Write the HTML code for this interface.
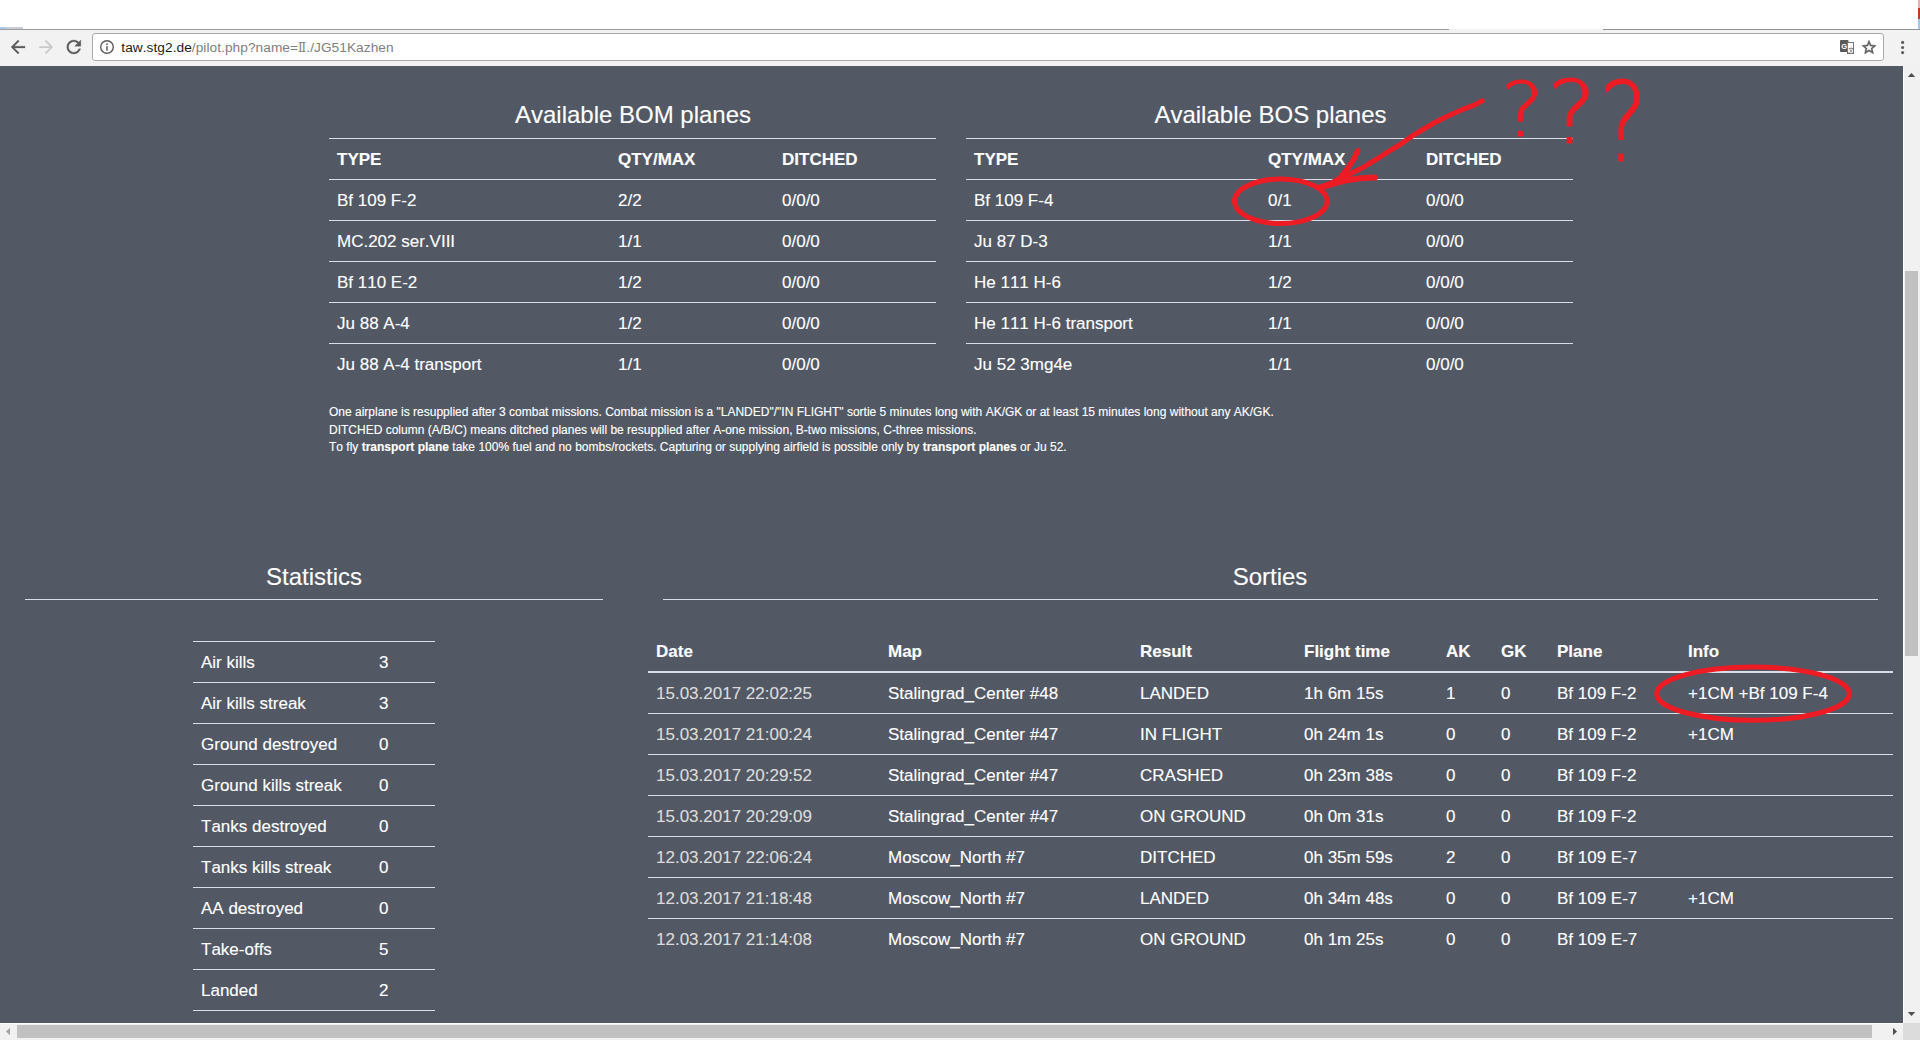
<!DOCTYPE html>
<html lang="en">
<head>
<meta charset="utf-8">
<title>Pilot</title>
<style>
*{box-sizing:border-box;margin:0;padding:0}
html,body{width:1920px;height:1040px;overflow:hidden;background:#fff}
body{position:relative;font-family:"Liberation Sans",Arial,sans-serif;color:#fff;font-size:17px;font-kerning:none;-webkit-text-stroke:0.12px #fff}
#chrome{position:absolute;left:0;top:0;width:1920px;height:66px;background:#fff}
#tabline{position:absolute;left:0;top:29px;width:1920px;height:1px;background:linear-gradient(to right,#9a9ca0 0,#9a9ca0 1449px,#f2f2f2 1449px,#f2f2f2 1603px,#8f949b 1603px)}
#toolbar{position:absolute;left:0;top:30px;width:1920px;height:36px;background:#f2f2f2}
#omni{position:absolute;left:92px;top:33px;width:1792px;height:28px;background:#fff;border:1px solid #aaa;border-radius:3px}
#url{position:absolute;left:121.3px;top:38.5px;font-size:13.7px;line-height:18px;color:#808080;white-space:nowrap;-webkit-text-stroke:0;letter-spacing:0.05px}
#url .rn{font-family:"DejaVu Serif","Liberation Serif",serif;font-size:12px}
#url b{font-weight:normal;color:#1c1c1c}
#page{position:absolute;left:0;top:66px;width:1903px;height:957px;background:#525965;overflow:hidden}
#vscroll{position:absolute;left:1903px;top:66px;width:17px;height:957px;background:#f1f1f1;border-left:1px solid #fdfdfd}
#vthumb{position:absolute;left:1905px;top:271px;width:13px;height:385px;background:#c1c1c1}
#hscroll{position:absolute;left:0;top:1023px;width:1903px;height:17px;background:#f1f1f1;border-top:1px solid #fdfdfd}
#hthumb{position:absolute;left:17px;top:1025px;width:1855px;height:13px;background:#c1c1c1}
#corner{position:absolute;left:1903px;top:1023px;width:17px;height:17px;background:#dcdcdc}
.abs{position:absolute}
h2{position:absolute;font-weight:normal;font-size:24px;line-height:28px;text-align:center;white-space:nowrap}
.hr{position:absolute;height:1px;background:#d9dee7}
table{position:absolute;border-collapse:collapse;table-layout:fixed}
td,th{height:41px;border-top:1px solid #d9dee7;padding:2px 0 0 8px;text-align:left;font-size:17px;white-space:nowrap;vertical-align:middle;line-height:24px}
th{font-weight:bold}
.notes{position:absolute;left:329px;top:404px;font-size:12px;line-height:17.5px;white-space:nowrap}
.sort th{border-top:none;border-bottom:2px solid #d9dee7;height:42px}
.sort tr:first-child + tr td{border-top:none}
.sort td.d{color:#dcdcdc;-webkit-text-stroke-color:#dcdcdc}
</style>
</head>
<body>
<div id="chrome">
  <div id="tabline"></div>
  <div id="toolbar"></div>
  <div id="omni"></div>
  <svg id="icons" style="position:absolute;left:0;top:0" width="1920" height="66" viewBox="0 0 1920 66">
<rect x="0" y="27" width="6" height="2" fill="#a9c7e8"/><rect x="6" y="27" width="17" height="2" fill="#c9cdd2"/>
<g fill="#5a5a5a">
<path transform="translate(7.5,36.5) scale(.875)" stroke="#5a5a5a" stroke-width=".35" d="M20 11H7.83l5.59-5.59L12 4l-8 8 8 8 1.41-1.41L7.83 13H20v-2z"/>
<path transform="translate(35.6,36.5) scale(.875)" fill="#c9c9c9" d="M12 4l-1.41 1.41L16.17 11H4v2h12.17l-5.58 5.59L12 20l8-8z"/>
<path transform="translate(63.3,36.5) scale(.875)" stroke="#5a5a5a" stroke-width=".35" d="M17.65 6.35C16.2 4.9 14.21 4 12 4c-4.42 0-7.99 3.58-7.99 8s3.57 8 7.99 8c3.73 0 6.84-2.55 7.73-6h-2.08c-.82 2.33-3.04 4-5.65 4-3.31 0-6-2.69-6-6s2.69-6 6-6c1.66 0 3.14.69 4.22 1.78L13 11h7V4l-2.35 2.35z"/>
<circle cx="107" cy="47" r="6.3" fill="none" stroke="#5a5a5a" stroke-width="1.4"/>
<rect x="106.25" y="43.4" width="1.5" height="1.6"/><rect x="106.25" y="46.2" width="1.5" height="4.4"/>
<rect x="1840" y="40" width="8.5" height="12" rx="1"/>
<rect x="1847.5" y="42.5" width="6" height="11" fill="#fff" stroke="#777" stroke-width="1"/>
<path d="M1847 52l0 2 2 0z"/>
<path transform="translate(1860.45,38.85) scale(.715)" stroke="#5a5a5a" stroke-width=".7" d="M22 9.24l-7.19-.62L12 2 9.19 8.63 2 9.24l5.46 4.73L5.82 21 12 17.27 18.18 21l-1.63-7.03L22 9.24zM12 15.4l-3.76 2.27 1-4.28-3.32-2.88 4.38-.38L12 6.1l1.71 4.04 4.38.38-3.32 2.88 1 4.28L12 15.4z"/>
<circle cx="1902.6" cy="42.4" r="1.55"/><circle cx="1902.6" cy="47.5" r="1.55"/><circle cx="1902.6" cy="52.6" r="1.55"/>
</g>
<text x="1841.3" y="49.3" font-family="Liberation Sans, sans-serif" font-weight="bold" font-size="7.5" fill="#fff">G</text>
<text x="1848.2" y="51.6" font-family="Liberation Sans, Noto Sans CJK SC, sans-serif" font-size="5.6" fill="#5a5a5a">文</text>
<rect x="1918" y="0" width="2" height="8" fill="#e8b0a8"/><rect x="1918" y="8" width="2" height="11" fill="#c0392b"/><rect x="1918" y="19" width="2" height="10" fill="#a9c4ea"/>
</svg>
  <div id="url"><b>taw.stg2.de</b>/pilot.php?name=<span class="rn">Ⅱ</span>./JG51Kazhen</div>
</div>
<div id="page"><div id="in" style="position:absolute;left:0;top:-66px;width:1903px;height:1040px">
<h2 style="left:329.5px;width:607px;top:101px">Available BOM planes</h2>
<table class="planes" style="left:329px;top:138px;width:607px">
<colgroup><col style="width:281px"><col style="width:164px"><col style="width:162px"></colgroup>
<tr><th>TYPE</th><th>QTY/MAX</th><th>DITCHED</th></tr>
<tr><td>Bf 109 F-2</td><td>2/2</td><td>0/0/0</td></tr>
<tr><td>MC.202 ser.VIII</td><td>1/1</td><td>0/0/0</td></tr>
<tr><td>Bf 110 E-2</td><td>1/2</td><td>0/0/0</td></tr>
<tr><td>Ju 88 A-4</td><td>1/2</td><td>0/0/0</td></tr>
<tr><td>Ju 88 A-4 transport</td><td>1/1</td><td>0/0/0</td></tr>
</table>
<h2 style="left:967px;width:607px;top:101px">Available BOS planes</h2>
<table class="planes" style="left:966px;top:138px;width:607px">
<colgroup><col style="width:294px"><col style="width:158px"><col style="width:155px"></colgroup>
<tr><th>TYPE</th><th>QTY/MAX</th><th>DITCHED</th></tr>
<tr><td>Bf 109 F-4</td><td>0/1</td><td>0/0/0</td></tr>
<tr><td>Ju 87 D-3</td><td>1/1</td><td>0/0/0</td></tr>
<tr><td>He 111 H-6</td><td>1/2</td><td>0/0/0</td></tr>
<tr><td>He 111 H-6 transport</td><td>1/1</td><td>0/0/0</td></tr>
<tr><td>Ju 52 3mg4e</td><td>1/1</td><td>0/0/0</td></tr>
</table>
<div class="notes">One airplane is resupplied after 3 combat missions. Combat mission is a "LANDED"/"IN FLIGHT" sortie 5 minutes long with AK/GK or at least 15 minutes long without any AK/GK.<br>DITCHED column (A/B/C) means ditched planes will be resupplied after A-one mission, B-two missions, C-three missions.<br>To fly <b>transport plane</b> take 100% fuel and no bombs/rockets. Capturing or supplying airfield is possible only by <b>transport planes</b> or Ju 52.</div>

<h2 style="left:25px;width:578px;top:563px">Statistics</h2>
<div class="hr" style="left:25px;width:578px;top:599px"></div>
<table class="stats" style="left:193px;top:641px;width:242px">
<colgroup><col style="width:178px"><col style="width:64px"></colgroup>
<tr><td>Air kills</td><td>3</td></tr>
<tr><td>Air kills streak</td><td>3</td></tr>
<tr><td>Ground destroyed</td><td>0</td></tr>
<tr><td>Ground kills streak</td><td>0</td></tr>
<tr><td>Tanks destroyed</td><td>0</td></tr>
<tr><td>Tanks kills streak</td><td>0</td></tr>
<tr><td>AA destroyed</td><td>0</td></tr>
<tr><td>Take-offs</td><td>5</td></tr>
<tr><td>Landed</td><td>2</td></tr>
<tr><td></td><td></td></tr>
</table>

<h2 style="left:662px;width:1216px;top:563px">Sorties</h2>
<div class="hr" style="left:663px;width:1215px;top:599px"></div>
<table class="sort" style="left:648px;top:630px;width:1245px">
<colgroup><col style="width:232px"><col style="width:252px"><col style="width:164px"><col style="width:142px"><col style="width:55px"><col style="width:56px"><col style="width:131px"><col style="width:213px"></colgroup>
<tr><th>Date</th><th>Map</th><th>Result</th><th>Flight time</th><th>AK</th><th>GK</th><th>Plane</th><th>Info</th></tr>
<tr><td class="d">15.03.2017 22:02:25</td><td>Stalingrad_Center #48</td><td>LANDED</td><td>1h 6m 15s</td><td>1</td><td>0</td><td>Bf 109 F-2</td><td>+1CM +Bf 109 F-4</td></tr>
<tr><td class="d">15.03.2017 21:00:24</td><td>Stalingrad_Center #47</td><td>IN FLIGHT</td><td>0h 24m 1s</td><td>0</td><td>0</td><td>Bf 109 F-2</td><td>+1CM</td></tr>
<tr><td class="d">15.03.2017 20:29:52</td><td>Stalingrad_Center #47</td><td>CRASHED</td><td>0h 23m 38s</td><td>0</td><td>0</td><td>Bf 109 F-2</td><td></td></tr>
<tr><td class="d">15.03.2017 20:29:09</td><td>Stalingrad_Center #47</td><td>ON GROUND</td><td>0h 0m 31s</td><td>0</td><td>0</td><td>Bf 109 F-2</td><td></td></tr>
<tr><td class="d">12.03.2017 22:06:24</td><td>Moscow_North #7</td><td>DITCHED</td><td>0h 35m 59s</td><td>2</td><td>0</td><td>Bf 109 E-7</td><td></td></tr>
<tr><td class="d">12.03.2017 21:18:48</td><td>Moscow_North #7</td><td>LANDED</td><td>0h 34m 48s</td><td>0</td><td>0</td><td>Bf 109 E-7</td><td>+1CM</td></tr>
<tr><td class="d">12.03.2017 21:14:08</td><td>Moscow_North #7</td><td>ON GROUND</td><td>0h 1m 25s</td><td>0</td><td>0</td><td>Bf 109 E-7</td><td></td></tr>
</table>
<svg id="anno" style="position:absolute;left:0;top:0" width="1903" height="1040" viewBox="0 0 1903 1040">
<g fill="none" stroke="#ed1c24" stroke-linecap="round" stroke-linejoin="round">
<ellipse cx="1280.8" cy="201.3" rx="46.3" ry="22.3" stroke-width="5"/>
<ellipse cx="1753" cy="693.7" rx="96.3" ry="26.6" stroke-width="5"/>
<path stroke-width="5" d="M1482.3 100.8L1474.2 105.1L1460.8 110.2L1447.3 116.2L1433.8 123L1420.4 131L1411.6 136.4L1400.2 144.5L1386.7 152.6L1379.4 157.5L1360.6 168.8L1341.9 177.8L1327.8 184.4L1318.4 187.7"/>
<path stroke-width="5.5" d="M1357.7 150.8L1353.8 159.2L1347.700 168.500L1340 177.700L1330.800 184.600"/>
<path stroke-width="6" d="M1374.700 177.600L1360.600 178.300L1346.600 180.200L1332.500 183.900L1321 187.300"/>
</g>
<g fill="#ed1c24" stroke="#ed1c24" stroke-linejoin="round" font-family="DejaVu Sans, sans-serif" font-weight="200">
<text transform="translate(1500.7,135.5) scale(1.1,1)" font-size="74" stroke-width="1.2">?</text>
<text transform="translate(1547.3,143.3) scale(1.055,1)" font-size="88" stroke-width="1.2">?</text>
<text transform="translate(1599,160.8) scale(.83,1)" font-size="111" stroke-width="1.2">?</text>
</g>
</svg>
</div></div>
<div id="vscroll"></div><div id="vthumb"></div>
<div id="hscroll"></div><div id="hthumb"></div>
<div id="corner"></div>
<svg style="position:absolute;left:0;top:0;pointer-events:none" width="1920" height="1040" viewBox="0 0 1920 1040">
<path d="M1911.5 73l3.7 4h-7.4z" fill="#505050"/>
<path d="M1911.5 1016l3.7-4h-7.4z" fill="#505050"/>
<path d="M1897 1031.5l-4-3.7v7.4z" fill="#505050"/>
<path d="M6 1031.5l4-3.7v7.4z" fill="#a3a3a3"/>
</svg>
</body>
</html>
